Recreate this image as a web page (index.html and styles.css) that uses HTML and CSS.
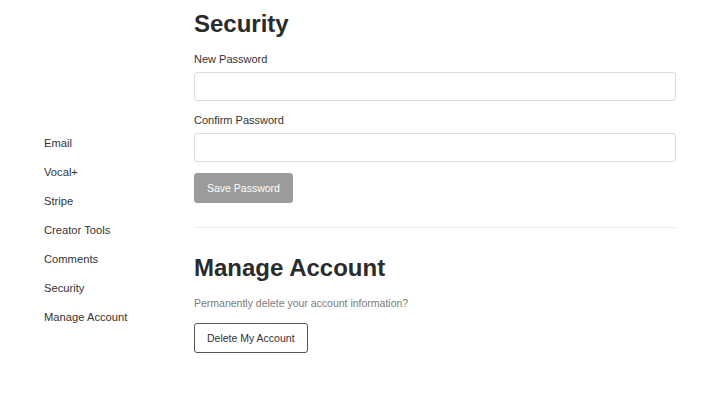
FILE: index.html
```html
<!DOCTYPE html>
<html lang="en">
<head>
<meta charset="utf-8">
<title>Account Settings</title>
<link rel="stylesheet" href="styles.css">
</head>
<body>
<div class="page">
  <nav class="sidebar">
    <a class="nav-item" href="#">Email</a>
    <a class="nav-item" href="#">Vocal+</a>
    <a class="nav-item" href="#">Stripe</a>
    <a class="nav-item" href="#">Creator Tools</a>
    <a class="nav-item" href="#">Comments</a>
    <a class="nav-item" href="#">Security</a>
    <a class="nav-item" href="#">Manage Account</a>
  </nav>
  <main class="main">
    <section class="section">
      <h1 class="heading">Security</h1>
      <label class="label" for="np">New Password</label>
      <input class="input" id="np" type="password">
      <label class="label label-gap" for="cp">Confirm Password</label>
      <input class="input" id="cp" type="password">
      <button class="btn btn-save" type="button">Save Password</button>
    </section>
    <hr class="divider">
    <section class="section">
      <h1 class="heading">Manage Account</h1>
      <p class="note">Permanently delete your account information?</p>
      <button class="btn btn-delete" type="button">Delete My Account</button>
    </section>
  </main>
</div>
</body>
</html>
```
FILE: styles.css
```css
* { box-sizing: border-box; }
html, body { margin: 0; padding: 0; background: #fff; }
body {
  font-family: "Liberation Sans", Arial, sans-serif;
  color: #333;
  width: 720px;
  height: 395px;
  overflow: hidden;
}
.page {
  display: flex;
  padding: 0 44px;
}
.sidebar {
  width: 150px;
  flex: none;
  display: flex;
  flex-direction: column;
  gap: 15px;
  padding-top: 136px;
}
.nav-item {
  font-size: 11.2px;
  line-height: 14px;
  color: #333;
  text-decoration: none;
}
.main {
  flex: 1;
  display: flex;
  flex-direction: column;
  padding-top: 10px;
}
.section {
  display: flex;
  flex-direction: column;
  align-items: flex-start;
}
.heading {
  margin: 0 0 14px;
  font-size: 24px;
  line-height: 28px;
  font-weight: bold;
  color: #2b2b2b;
}
.label {
  font-size: 11px;
  line-height: 14px;
  color: #333;
  margin-bottom: 6px;
}
.label-gap { margin-top: 12px; }
.input {
  width: 100%;
  height: 29px;
  border: 1px solid #dcdcdc;
  border-radius: 3px;
  background: #fff;
  margin: 0;
}
.btn {
  font-family: "Liberation Sans", Arial, sans-serif;
  font-size: 10.5px;
  height: 30px;
  padding: 0 12px;
  border-radius: 3px;
  cursor: pointer;
}
.btn-save {
  margin-top: 11px;
  background: #9b9b9b;
  border: 1px solid #9b9b9b;
  color: #fff;
}
.divider {
  margin: 24px 0 26px;
  border: 0;
  border-top: 1px solid #ececec;
  height: 0;
  width: 100%;
}
.note {
  margin: 0 0 13px;
  font-size: 10.5px;
  line-height: 14px;
  color: #7a7a7a;
}
.btn-delete {
  background: #fff;
  border: 1px solid #555;
  color: #333;
}
```
